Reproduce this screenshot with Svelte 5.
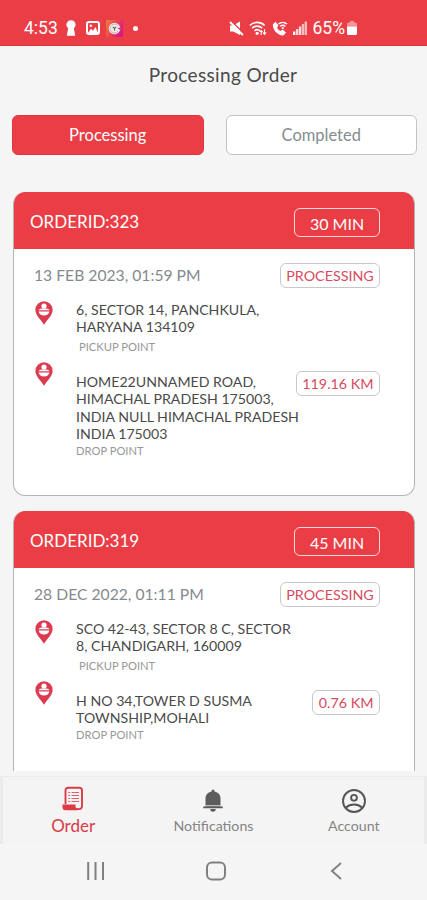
<script lang="ts">
  type Order = {
    id: number
    eta: string
    date: string
    pickup: string[]
    drop: string[]
    distance: string
  }

  const orders: Order[] = [
    {
      id: 323,
      eta: '30 MIN',
      date: '13 FEB 2023, 01:59 PM',
      pickup: ['6, SECTOR 14, PANCHKULA,', 'HARYANA 134109'],
      drop: ['HOME22UNNAMED ROAD,', 'HIMACHAL PRADESH 175003,', 'INDIA NULL HIMACHAL PRADESH', 'INDIA 175003'],
      distance: '119.16 KM',
    },
    {
      id: 319,
      eta: '45 MIN',
      date: '28 DEC 2022, 01:11 PM',
      pickup: ['SCO 42-43, SECTOR 8 C, SECTOR', '8, CHANDIGARH, 160009'],
      drop: ['H NO 34,TOWER D SUSMA', 'TOWNSHIP,MOHALI'],
      distance: '0.76 KM',
    },
  ]

  let tab = $state('Processing')
  let page = $state('Order')
</script>

{#snippet pin()}
  <svg class="pin" viewBox="0 0 18 24" width="18" height="24">
    <path d="M9 .3a8.600 8.600 0 0 0-8.600 8.600C.4 14 5 17.500 9 23.700c4-6.200 8.600-9.700 8.600-14.800A8.600 8.600 0 0 0 9 .3z" fill="#dc3a50" />
    <circle cx="9" cy="5" r="2.600" fill="#fff" />
    <path d="M3.600 9.200C4.200 7.800 6 7.500 9 7.500s4.800.3 5.400 1.700z" fill="#fff" />
    <path d="M3.600 10.600h10.800c-.4 2.600-2.600 4-5.400 4s-5-1.400-5.400-4z" fill="#fff" />
  </svg>
{/snippet}

<div class="screen">
  <header class="status">
    <div class="status__left">
      <span class="status__text status__time">4:53</span>
      <svg class="status__keyhole" viewBox="0 0 10 16" width="10" height="16">
        <path d="M5 .3a4.400 4.400 0 0 0-2.800 7.900L.8 15.700h8.400L7.800 8.200A4.400 4.400 0 0 0 5 .3z" fill="#fff" />
      </svg>
      <svg class="status__image" viewBox="0 0 14 14" width="14" height="14">
        <rect x="1" y="1" width="12" height="12" rx="2" fill="none" stroke="#fff" stroke-width="2" />
        <circle cx="4.800" cy="4.800" r="1.200" fill="#fff" />
        <path d="M2 12l3-4.200 2 2L9.500 6l2.700 6z" fill="#fff" />
      </svg>
      <svg class="status__app" viewBox="0 0 17 17" width="17" height="17">
        <defs>
          <linearGradient id="app-bg" x1="0" y1="0" x2="1" y2=".5">
            <stop offset="0" stop-color="#f0823a" />
            <stop offset=".5" stop-color="#ee4a4c" />
            <stop offset="1" stop-color="#d91a86" />
          </linearGradient>
        </defs>
        <rect width="17" height="17" rx="1" fill="url(#app-bg)" />
        <circle cx="8.500" cy="8.500" r="5.800" fill="#efe9e4" />
        <path d="M12 5.800a4.400 4.400 0 1 0 0 5.400" fill="none" stroke="#c4b6b4" stroke-width="1" />
        <path d="M6.800 6.800l1.700 1.700 1.700-1.700M8.500 8.500v2.300" fill="none" stroke="#666" stroke-width="1.100" />
        <path d="M11.500 8.500l3-1.300v2.800z" fill="#d8338b" />
      </svg>
      <span class="status__dot"></span>
    </div>
    <div class="status__right">
      <svg viewBox="0 0 15 15" width="15" height="15">
        <path d="M1 4.600h3.200L11 .6v13.500L4.200 10.400H1z" fill="#fff" />
        <path d="M2.600 .2l12 12" stroke="#ea3d45" stroke-width="1.400" />
        <path d="M1 1l12.800 13" stroke="#fff" stroke-width="1.900" />
      </svg>
      <svg viewBox="0 0 18 15" width="18" height="15">
        <g fill="none" stroke="#fff" stroke-width="1.700">
          <path d="M.8 4.500a10.500 10.500 0 0 1 14.800 0M3.200 7.200a7 7 0 0 1 10 0M5.500 9.800a4 4 0 0 1 5.400 0" />
        </g>
        <circle cx="8.200" cy="12.300" r="1.600" fill="#fff" />
        <path d="M10.200 11l2-2.300 2 2.300zM13.200 11.500h4.600l-2.300 2.700z" fill="#fff" />
        <path d="M12.200 10v4M15.500 8.300v4" stroke="#fff" stroke-width="1.100" />
      </svg>
      <svg viewBox="0 0 16 15" width="16" height="15">
        <path d="M.9 3.200L3.500.8l3 3.700L5 6.700a9 9 0 0 0 3.400 3.400l2.300-1.500 3.400 2.800-2.600 3C6 14.800.3 8.800.9 3.200z" fill="#fff" />
        <path d="M6.500 3a6.500 6.500 0 0 1 8.500 0M8.300 5.300a4 4 0 0 1 5 0" fill="none" stroke="#fff" stroke-width="1.500" />
        <circle cx="10.800" cy="7" r="1.100" fill="#fff" />
      </svg>
      <svg viewBox="0 0 14 14" width="14" height="14">
        <path d="M0 10.500h2.400V14H0z" fill="#fff" />
        <path d="M3 8h2.400v6H3zM5.900 5.500h2.400V14H5.900z" fill="#fff" fill-opacity=".8" />
        <path d="M8.800 3h2.300v11H8.800zM11.600.5H14V14h-2.400z" fill="#fff" fill-opacity=".65" />
      </svg>
      <span class="status__text status__battery">65%</span>
      <svg class="status__cell" viewBox="0 0 10 14" width="10" height="14">
        <path d="M3 0h4v1.500h1.500A1.500 1.500 0 0 1 10 3v2.800H0V3a1.500 1.500 0 0 1 1.500-1.500H3z" fill="#fff" fill-opacity=".45" />
        <path d="M0 5.500h10v7A1.500 1.500 0 0 1 8.500 14h-7A1.500 1.500 0 0 1 0 12.500z" fill="#fff" />
      </svg>
    </div>
  </header>

  <h1 class="title">Processing Order</h1>

  <div class="tabs">
    {#each ['Processing', 'Completed'] as name}
      <button class="tab" class:tab--active={tab === name} onclick={() => (tab = name)}>{name}</button>
    {/each}
  </div>

  <main class="list">
    {#each orders as order (order.id)}
      <article class="card">
        <div class="card__head">
          <span class="card__id">ORDERID:{order.id}</span>
          <span class="card__eta">{order.eta}</span>
        </div>
        <div class="card__body">
          <div class="card__row">
            <span class="card__date">{order.date}</span>
            <span class="badge badge--status">PROCESSING</span>
          </div>
          <div class="stop">
            {@render pin()}
            <div class="stop__text">
              {#each order.pickup as line}
                <p>{line}</p>
              {/each}
              <small class="stop__label stop__label--pickup">PICKUP POINT</small>
            </div>
          </div>
          <div class="stop stop--drop">
            {@render pin()}
            <div class="stop__text">
              {#each order.drop as line}
                <p>{line}</p>
              {/each}
              <small class="stop__label">DROP POINT</small>
            </div>
            <span class="badge badge--km">{order.distance}</span>
          </div>
        </div>
      </article>
    {/each}
  </main>

  <nav class="nav">
    <button class="nav__item" class:nav__item--active={page === 'Order'} onclick={() => (page = 'Order')}>
      <svg viewBox="0 0 24 26" width="24" height="26">
        <path d="M4.500 18V4.300a2.500 2.500 0 0 1 2.500-2.500h11.500a2.500 2.500 0 0 1 2.500 2.500v16a2.800 2.800 0 0 1-2.800 2.800H5" fill="none" stroke="currentColor" stroke-width="1.900" />
        <path d="M1.500 18.400h13v2a2 2 0 0 0 2 2v1.800H4.500a3 3 0 0 1-3-3z" fill="currentColor" />
        <path d="M7.300 6.500h1.800M7.300 9.500h1.800M7.300 12.500h1.800M7.300 15.500h1.800M10.500 6.500H18M10.500 9.500H18M10.500 12.500H18M10.500 15.500H18" stroke="currentColor" stroke-width="1.100" stroke-opacity=".8" />
      </svg>
      <span>Order</span>
    </button>
    <button class="nav__item" class:nav__item--active={page === 'Notifications'} onclick={() => (page = 'Notifications')}>
      <svg viewBox="0 0 24 26" width="24" height="26">
        <path d="M12 2.500a1.500 1.500 0 0 1 1.500 1.500v.4c4 .8 6 3.500 6 7v8.100h2.300v1.700H2.200v-1.700h2.300v-8.100c0-3.500 2-6.200 6-7V4A1.500 1.500 0 0 1 12 2.500zM9.300 22h5.400a2.700 2.700 0 0 1-5.400 0z" fill="#5d5d5d" />
        <path d="M4.500 18.700h15" stroke="#f4f4f4" stroke-width=".8" />
      </svg>
      <span>Notifications</span>
    </button>
    <button class="nav__item" class:nav__item--active={page === 'Account'} onclick={() => (page = 'Account')}>
      <svg class="nav__account" viewBox="0 0 26 26" width="26" height="26">
        <g fill="none" stroke="#555" stroke-width="1.900">
          <circle cx="13" cy="13" r="11" />
          <circle cx="13" cy="9.800" r="2.900" />
          <path d="M5 19.500c4.500-4 11.500-4 16 0" />
        </g>
      </svg>
      <span>Account</span>
    </button>
  </nav>

  <footer class="keys">
    <svg viewBox="0 0 20 20" width="20" height="20">
      <path d="M2.200 1v18M9.500 1v18M17 1v18" stroke="#808080" stroke-width="2" />
    </svg>
    <svg viewBox="0 0 20 20" width="20" height="20">
      <rect x="1" y="1.500" width="18" height="17" rx="5" fill="none" stroke="#808080" stroke-width="2" />
    </svg>
    <svg viewBox="0 0 20 20" width="20" height="20">
      <path d="M15 2L6 10l9 8" fill="none" stroke="#808080" stroke-width="1.900" />
    </svg>
  </footer>
</div>

<style>
  .screen {
    display: flex;
    flex-direction: column;
    width: 427px;
    height: 900px;
    overflow: hidden;
    background: #f5f5f5;
    font-family: Lato, 'Liberation Sans', sans-serif;
    color: #4a4a4a;
  }

  button {
    padding: 0;
    border: 0;
    background: none;
    font: inherit;
    color: inherit;
  }

  svg {
    display: block;
    flex: none;
  }

  .status {
    display: flex;
    flex: none;
    height: 46px;
    padding: 11px 70px 0 24px;
    box-sizing: border-box;
    justify-content: space-between;
    background: #ea3d45;
    border-bottom: 1px solid #e0303a;
    color: #fff;
  }

  .status__left,
  .status__right {
    display: flex;
    align-items: center;
  }

  .status__right {
    gap: 5px;
  }

  .status__text {
    font-family: Roboto, sans-serif;
    font-size: 17.500px;
  }

  .status__time {
    width: 42px;
  }

  .status__image {
    margin: 0 6px 0 10px;
  }

  .status__dot {
    width: 5px;
    height: 5px;
    margin-left: 10px;
    border-radius: 50%;
    background: #fff;
  }

  .status__battery {
    margin-left: 1px;
  }

  .status__cell {
    margin-left: -3px;
  }

  .title {
    flex: none;
    height: 69px;
    margin: 0;
    padding-left: 19px;
    box-sizing: border-box;
    font-size: 19px;
    font-weight: 400;
    letter-spacing: 0.35px;
    line-height: 58px;
    text-align: center;
  }

  .tabs {
    display: flex;
    flex: none;
    gap: 22px;
    padding: 0 10px 0 12px;
    margin-bottom: 37px;
  }

  .tab {
    flex: 1;
    height: 40px;
    padding-bottom: 1px;
    border: 1px solid #c3c3c3;
    border-radius: 6px;
    background: #fff;
    font-size: 16.500px;
    color: #858c92;
  }

  .tab--active {
    border-color: #e3343d;
    background: #ea3d45;
    color: #fff;
  }

  .list {
    display: flex;
    flex-direction: column;
    gap: 15px;
    height: 579px;
    flex: none;
    padding: 0 12px 0 13px;
    overflow: hidden;
  }

  .card {
    flex: none;
    height: 304px;
    box-sizing: border-box;
    overflow: hidden;
    border: 1px solid #b4b4b4;
    border-top: 0;
    border-radius: 12px;
    background: #fff;
  }

  .card__head {
    display: flex;
    align-items: center;
    justify-content: space-between;
    height: 57px;
    margin: 0 -1px;
    padding: 3px 35px 0 17px;
    box-sizing: border-box;
    background: #ea3d45;
    color: #fff;
  }

  .card__id {
    padding-bottom: 2px;
    font-size: 17px;
  }

  .card__eta {
    width: 86px;
    height: 29px;
    box-sizing: border-box;
    border: 1.500px solid #ffd9d9;
    border-radius: 6px;
    font-size: 16px;
    line-height: 29px;
    text-align: center;
  }

  .card__body {
    padding: 14px 34px 0 20px;
  }

  .card__row {
    display: flex;
    justify-content: space-between;
    height: 25px;
    margin-bottom: 13px;
  }

  .card__date {
    font-size: 15.700px;
    line-height: 24px;
    color: #858a8f;
  }

  .badge {
    flex: none;
    height: 25px;
    box-sizing: border-box;
    border: 1px solid #c8c8c8;
    border-radius: 6px;
    font-size: 14.300px;
    line-height: 24px;
    text-align: center;
    color: #d84a5e;
  }

  .badge--status {
    width: 100px;
  }

  .badge--km {
    padding: 0 5.500px;
    margin: 9px 0 0 auto;
  }

  .stop {
    display: flex;
    height: 61px;
    padding-left: 1px;
  }

  .stop__text {
    width: 0;
    margin: 0 0 0 23px;
    white-space: nowrap;
  }

  .stop--drop .stop__text {
    margin-top: 11px;
  }

  .stop p {
    margin: 0;
    font-size: 14.150px;
    line-height: 17.400px;
  }

  .stop__label {
    display: block;
    padding-top: 1px;
    font-size: 11.200px;
    line-height: 14px;
    color: #989898;
  }

  .stop__label--pickup {
    padding: 4px 0 0 3px;
  }

  .nav {
    display: flex;
    flex: none;
    height: 68px;
    margin-top: 5px;
    box-sizing: border-box;
    border: solid #ebebeb;
    border-width: 1px 3px 0;
    background: #f4f4f4;
  }

  .nav__item {
    display: flex;
    flex: 1;
    flex-direction: column;
    align-items: center;
    padding-top: 10px;
    font-size: 14.200px;
    line-height: 26px;
    color: #858585;
  }

  .nav__account {
    margin-top: 1px;
    margin-bottom: -1px;
  }

  .nav__item--active {
    padding-top: 9px;
    font-size: 17px;
    line-height: 28px;
    color: #dc3a46;
  }

  .keys {
    display: flex;
    justify-content: space-between;
    padding: 17px 81px 0 86px;
  }
</style>
